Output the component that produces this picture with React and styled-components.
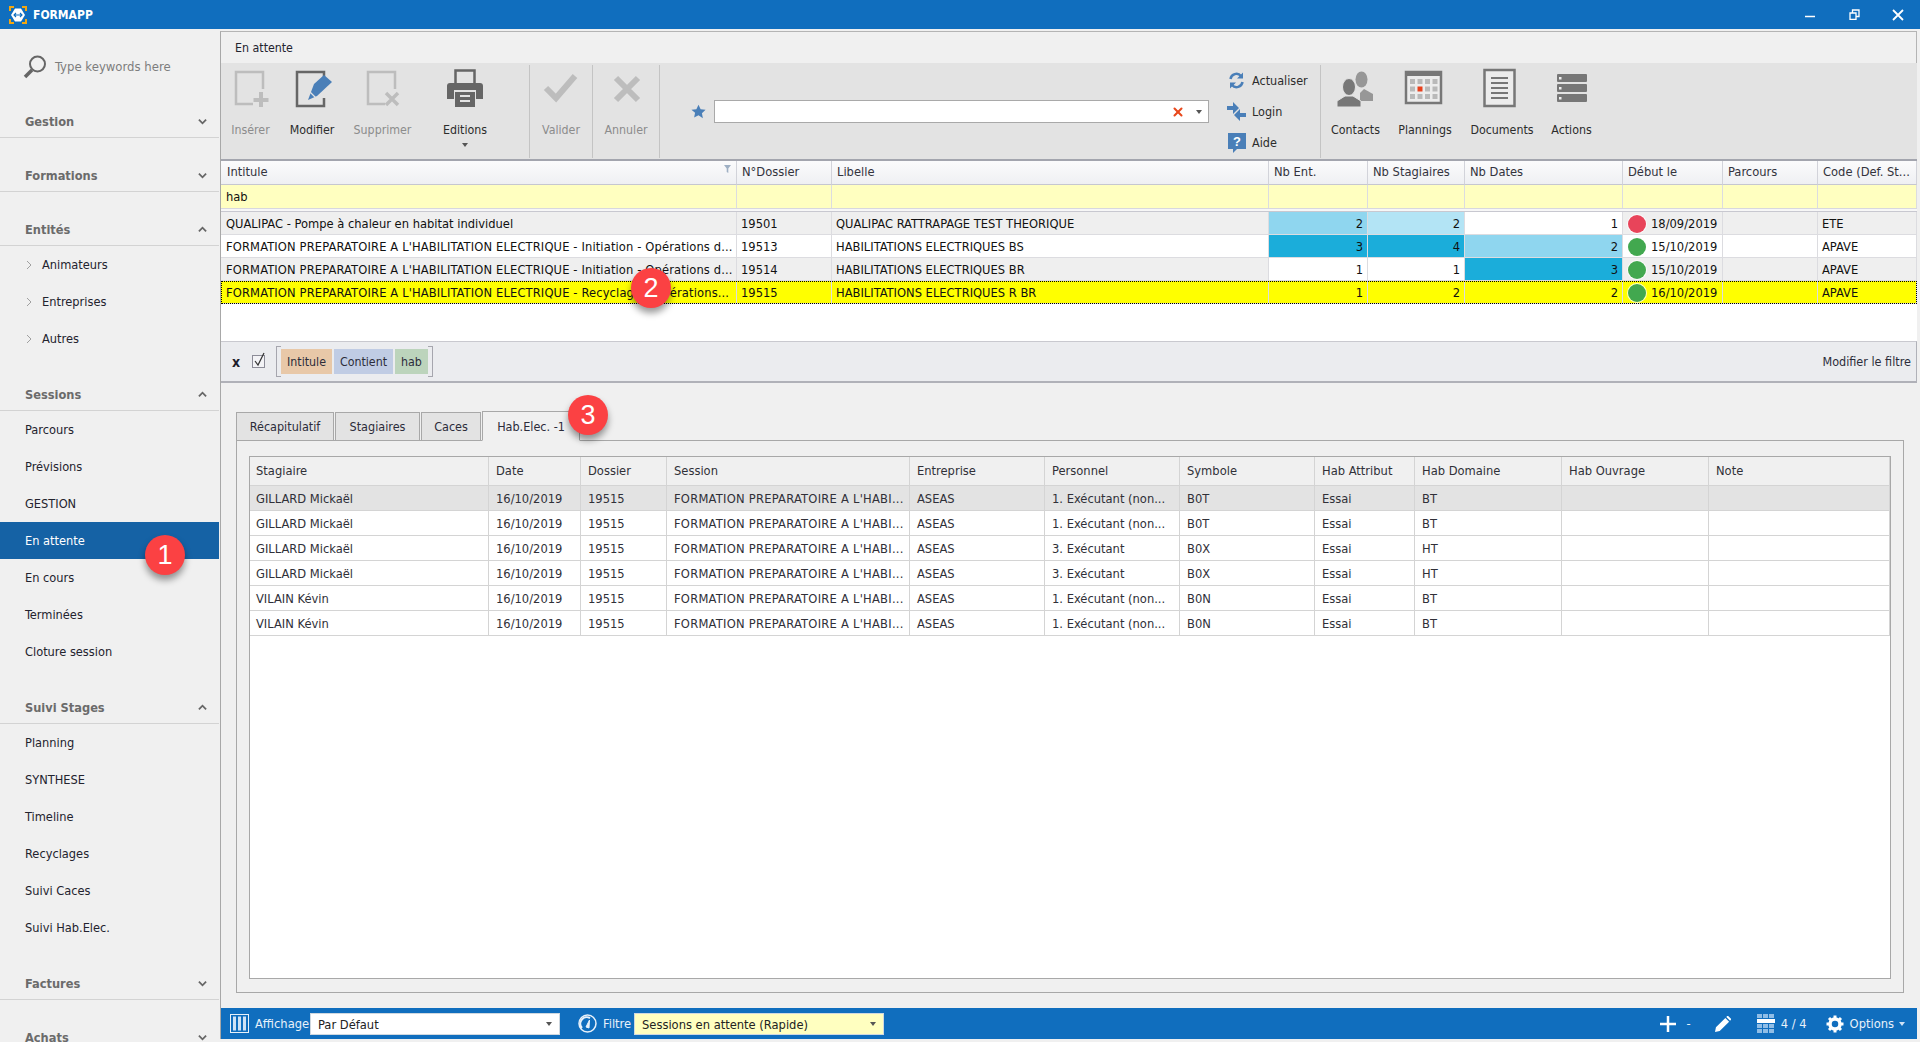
import React from 'react';
import styled, { createGlobalStyle } from 'styled-components';
import { X } from 'lucide-react';

const GlobalStyle = createGlobalStyle`
  html, body {
    margin: 0;
    padding: 0;
    height: 100%;
    overflow: hidden;
    background: #f0f0f0;
  }
  * {
    box-sizing: border-box;
  }
`

const BLUE = '#106ebe';
const UPPER_COLS = '516px 95px 437px 99px 97px 158px 100px 95px 99px';
const LOWER_COLS = '239px 92px 86px 243px 135px 135px 135px 100px 147px 147px 181px';

const Page = styled.div`
  position: relative;
  width: 1920px;
  height: 1042px;
  overflow: hidden;
  display: flex;
  flex-direction: column;
  background: #f0f0f0;
  font-family: "DejaVu Sans Condensed", "Noto Sans", "Liberation Sans", sans-serif;
  font-size: 12.3px;
  color: #23232e;
`

const TitleBar = styled.div`
  height: 29px;
  flex: none;
  background: ${BLUE};
  display: flex;
  align-items: center;
  padding-left: 9px;
  color: #fff;
`

const AppName = styled.span`
  font-weight: 700;
  margin-left: 6px;
  font-size: 12px;
`

const WindowButtons = styled.div`
  margin-left: auto;
  display: flex;
  align-items: center;
`

const WindowButton = styled.span`
  width: 44px;
  height: 29px;
  display: flex;
  align-items: center;
  justify-content: center;
`

const Body = styled.div`
  flex: 1;
  display: flex;
  min-height: 0;
`

const Sidebar = styled.div`
  width: 220px;
  flex: none;
  overflow: hidden;
  padding-right: 1px;
  font-size: 12.7px;
`

const SearchBox = styled.div`
  height: 55px;
  display: flex;
  align-items: center;
  padding: 20px 0 0 23px;
  gap: 8px;
  color: #7d7d7d;
  font-size: 13px;
`

const SectionHeader = styled.div`
  height: 54px;
  display: flex;
  align-items: flex-end;
  justify-content: space-between;
  padding: 0 12px 7px 25px;
  border-bottom: 1px solid #d3d3d3;
  font-weight: 700;
  font-size: 12.7px;
  line-height: 16px;
  color: #6b6b6b;

  svg {
    margin-bottom: 4px;
  }
`

const NavItem = styled.div`
  height: 37px;
  display: flex;
  align-items: center;
  padding-left: ${p => (p.$sub ? '26px' : '25px')};
  background: ${p => (p.$active ? '#1562a5' : 'transparent')};
  color: ${p => (p.$active ? '#fff' : '#23232e')};
  gap: 9px;
`

const Main = styled.div`
  width: 1697px;
  flex: none;
  margin: 2px 0 3px;
  display: flex;
  flex-direction: column;
  border-left: 1px solid #a8a8a8;
  border-top: 1px solid #b4b4b4;
  min-height: 0;
`

const PageTitle = styled.div`
  height: 31px;
  flex: none;
  display: flex;
  align-items: center;
  padding-left: 14px;
  background: #f0f0f0;
  border-right: 1px solid #b4b4b4;
`

const Toolbar = styled.div`
  height: 96px;
  flex: none;
  display: flex;
  padding: 2px 0 1px;
  background: #e3e3e3;
`

const ToolGroup = styled.div`
  display: flex;
  flex: none;
  width: ${p => p.$width}px;
  padding-left: ${p => p.$pad || 0}px;
  border-right: ${p => (p.$plain ? '0' : '1px solid #c4c4c4')};
`

const ToolButton = styled.div`
  width: ${p => p.$width}px;
  flex: none;
  display: flex;
  flex-direction: column;
  align-items: center;
  padding-top: 3px;
  color: ${p => (p.$disabled ? '#8c8c8c' : '#2c2c2c')};
`

const ToolLabel = styled.span`
  margin-top: 12px;
  line-height: 16px;
`

const SmallCaret = styled.span`
  width: 0;
  height: 0;
  flex: none;
  margin-top: ${p => p.$top || 0}px;
  border-left: 3px solid transparent;
  border-right: 3px solid transparent;
  border-top: 4px solid ${p => p.$color || '#555'};
`

const SearchGroup = styled(ToolGroup)`
  align-items: center;
`

const SearchInput = styled.div`
  width: 495px;
  height: 23px;
  margin-left: 8px;
  background: #fff;
  border: 1px solid #a9a9a9;
  display: flex;
  align-items: center;
  justify-content: flex-end;
  gap: 11px;
  padding-right: 6px;
`

const LinkColumn = styled.div`
  margin-left: 18px;
  display: flex;
  flex-direction: column;
  height: 93px;
  font-size: 12.5px;
`

const LinkRow = styled.div`
  height: 32px;
  display: flex;
  align-items: center;
  gap: 6px;
  color: #2c2c2c;
`

const LinkIcon = styled.span`
  width: 19px;
  flex: none;
  display: flex;
  justify-content: center;
`

const GridHead = styled.div`
  flex: none;
  border-top: 2px solid #a3a5ae;
  font-size: 12.8px;
`

const GridRow = styled.div`
  display: grid;
  grid-template-columns: ${UPPER_COLS};
  height: ${p => p.$height}px;
`

const HeadCell = styled.div`
  display: flex;
  align-items: center;
  padding: 0 0 2px 5px;
  position: relative;
  background: linear-gradient(#fbfbfc, #eff0f3);
  border-right: 1px solid #d2d3da;
  border-bottom: 1px solid #c6c7d0;
  color: #33333d;

  &:first-child {
    padding-left: 6px;
  }
`

const FunnelMark = styled.svg`
  position: absolute;
  right: 5px;
  top: 4px;
`

const FilterCell = styled.div`
  display: flex;
  align-items: center;
  padding-left: 5px;
  background: #ffffc0;
  border-right: 1px solid #dcdce0;
  color: #111;
`

const Spacer = styled.div`
  height: 4px;
  background: #f7f7f7;
  border-top: 1px solid #d8d8de;
  border-bottom: 1px solid #c8c8d0;
`

const DataRow = styled.div`
  display: grid;
  grid-template-columns: ${UPPER_COLS};
  height: 23px;
  background: ${p => (p.$selected ? '#ffff00' : p.$odd ? '#efefef' : '#fff')};
  outline: ${p => (p.$selected ? '1px dotted #000' : 'none')};
  outline-offset: -1px;
  color: #111;
  font-size: 12.8px;
`

const DataCell = styled.div`
  display: flex;
  align-items: center;
  justify-content: ${p => (p.$num ? 'flex-end' : 'flex-start')};
  padding: ${p => (p.$num ? '1px 4px 0 0' : '1px 0 0 4px')};
  background: ${p => p.$fill || 'transparent'};
  border-right: 1px solid #dcdce0;
  border-bottom: 1px solid #dcdce0;
  gap: 5px;
  white-space: nowrap;
  overflow: hidden;
  letter-spacing: ${p => (p.$wide ? '0.135px' : '0')};

  &:first-child {
    padding-left: 5px;
  }
`

const StatusDot = styled.span`
  width: 18px;
  height: 18px;
  flex: none;
  margin-left: 1px;
  border-radius: 50%;
  background: ${p => p.$color};
  box-shadow: 0 0 0 1px #ffffffc0;
`

const EmptyArea = styled.div`
  flex: none;
  height: 37px;
  background: #fff;
`

const FilterBar = styled.div`
  height: 42px;
  flex: none;
  display: flex;
  align-items: center;
  padding: 0 5px 0 8px;
  background: #ebecef;
  border-top: 1px solid #c9c9cf;
  border-bottom: 2px solid #b0b1b8;
  border-right: 1px solid #b0b1b8;
  font-size: 12.3px;
`

const ClearMark = styled.span`
  width: 14px;
  text-align: center;
  font-weight: 700;
  font-size: 14px;
  line-height: 14px;
  color: #1d1d2b;
`

const CheckFrame = styled.span`
  width: 13px;
  height: 13px;
  margin-left: 9px;
  display: flex;
  border: 1px solid #8c8c98;
  background: #f3f3f6;

  svg {
    margin-top: -4px;
    flex: none;
  }
`

const ChipBracket = styled.div`
  position: relative;
  margin-left: 11px;
  display: flex;
  gap: 2px;
  padding: 0 5px;

  &::before,
  &::after {
    content: '';
    position: absolute;
    top: -3px;
    bottom: -3px;
    width: 4px;
    border: 1px solid #a6a6ae;
  }

  &::before {
    left: 0;
    border-right: 0;
  }

  &::after {
    right: 0;
    border-left: 0;
  }
`

const Chip = styled.span`
  height: 25px;
  width: ${p => p.$width}px;
  display: flex;
  align-items: center;
  justify-content: center;
  background: ${p => p.$color};
  color: #2c2c3a;
`

const ModifyLink = styled.span`
  margin-left: auto;
  color: #2c2c3a;
  font-size: 12.5px;
`

const Detail = styled.div`
  flex: 1;
  min-height: 0;
  display: flex;
  flex-direction: column;
  padding: 28px 13px 15px 15px;
`

const TabStrip = styled.div`
  display: flex;
  height: 30px;
  flex: none;
  align-items: flex-end;
  margin-bottom: -1px;
  position: relative;
  font-size: 12.5px;
`

const Tab = styled.div`
  width: ${p => p.$width}px;
  height: ${p => (p.$active ? '30px' : '29px')};
  display: flex;
  align-items: center;
  justify-content: center;
  margin-right: ${p => (p.$active ? '0' : '1px')};
  background: ${p => (p.$active ? '#f0f0f0' : '#e3e3e3')};
  border: 1px solid #a8a8a8;
  border-bottom-color: ${p => (p.$active ? '#f0f0f0' : '#a8a8a8')};
  color: #2c2c3a;
`

const TabPanel = styled.div`
  flex: 1;
  min-height: 0;
  padding: 15px 12px 13px 12px;
  border: 1px solid #a8a8a8;
`

const InnerGrid = styled.div`
  height: 100%;
  background: #fff;
  border: 1px solid #a8a8a8;
  font-size: 12.8px;
`

const InnerRow = styled.div`
  display: grid;
  grid-template-columns: ${LOWER_COLS};
  height: ${p => p.$height}px;
  background: ${p => p.$bg};
`

const InnerCell = styled.div`
  display: flex;
  align-items: center;
  padding: ${p => (p.$head ? '0 0 2px' : '1px 0 0')} 7px;
  border-right: 1px solid #d4d4d4;
  border-bottom: 1px solid #d4d4d4;
  white-space: nowrap;
  overflow: hidden;
  color: #303038;
  letter-spacing: ${p => (p.$wide ? '0.25px' : '0')};

  &:first-child {
    padding-left: 6px;
  }
`

const StatusBar = styled.div`
  height: 31px;
  flex: none;
  display: flex;
  align-items: center;
  padding: 0 12px 0 9px;
  background: ${BLUE};
  color: #e8f1fa;
  font-size: 12.8px;
`

const StatusLabel = styled.span`
  width: ${p => p.$width}px;
  flex: none;
  margin-left: 6px;
  white-space: nowrap;
`

const SelectBox = styled.div`
  width: 250px;
  height: 22px;
  flex: none;
  display: flex;
  align-items: center;
  justify-content: space-between;
  padding: 1px 7px 0;
  background: ${p => p.$bg};
  border: 1px solid #cfd8e0;
  color: #222;
  margin-right: ${p => p.$gap || 0}px;
`

const StatusRight = styled.div`
  margin-left: auto;
  display: flex;
  align-items: center;
`

const StatusItem = styled.span`
  display: flex;
  align-items: center;
  flex: none;
  margin-right: ${p => p.$after || 0}px;
`

const Marker = styled.div`
  position: absolute;
  left: ${p => p.$x - 20}px;
  top: ${p => p.$y - 20}px;
  width: 40px;
  height: 40px;
  border-radius: 50%;
  display: flex;
  align-items: center;
  justify-content: center;
  background: #fb4143;
  color: #fff;
  font-family: "Liberation Sans", sans-serif;
  font-size: 27px;
  box-shadow: 0 5px 7px rgba(0, 0, 0, 0.4);
`

const Logo = () => (
  <svg width="18" height="18" viewBox="0 0 18 18" fill="none">
    <path d="M1 5V1h4M13 1h4v4M17 13v4h-4M5 17H1v-4" stroke="#f3a712" strokeWidth="2" />
    <path d="M6 2.500h6l4 6.500-4 6.500H6L2 9z" fill="#fff" />
    <path d="M5 9h8M7 7L5 9L7 11M11 7L13 9L11 11" stroke={BLUE} strokeWidth="1.100" />
  </svg>
);

const Magnifier = () => (
  <svg width="24" height="24" viewBox="0 0 24 24" fill="none" stroke="#666">
    <circle cx="14.500" cy="9" r="7.500" strokeWidth="2" />
    <path d="M9 15L2 22" strokeWidth="3.500" />
  </svg>
);

const Chevron = ({ up, color = '#666', size = 9 }) => (
  <svg width={size} height={size} viewBox="0 0 10 10" fill="none" stroke={color} strokeWidth="2">
    <path d={up ? 'M1 7L5 3L9 7' : 'M1 3L5 7L9 3'} />
  </svg>
);

const SubArrow = () => (
  <svg width="7" height="10" viewBox="0 0 7 10" fill="none" stroke="#a0a0a0" strokeWidth="1">
    <path d="M1 1l4 4-4 4" />
  </svg>
);

const Tool = ({ children }) => (
  <svg width="44" height="42" viewBox="0 0 44 42" fill="none">{children}</svg>
);

const DocFrame = ({ color, sw }) => (
  <path d="M24 36H7V4h27v17" stroke={color} strokeWidth={sw} />
);

const InsertIcon = () => (
  <Tool>
    <DocFrame color="#bdbdbd" sw="2.500" />
    <path d="M32 24v15M24.500 32h15" stroke="#bdbdbd" strokeWidth="4" />
  </Tool>
);

const EditIcon = () => (
  <Tool>
    <path d="M34 10V4H7v34h27v-8" stroke="#666" strokeWidth="2.500" />
    <path d="M24 16l10-9 8 7-15 14-9 4z" fill="#4a7fb8" />
    <path d="M20 24l7 7" stroke="#e3e3e3" strokeWidth="1.200" />
  </Tool>
);

const DeleteIcon = () => (
  <Tool>
    <DocFrame color="#bdbdbd" sw="2.500" />
    <path d="M25 25l12 12M37 25L25 37" stroke="#bdbdbd" strokeWidth="3.500" />
  </Tool>
);

const PrintIcon = () => (
  <Tool>
    <path d="M12.500 16V2.500h19V16" stroke="#666" strokeWidth="2.500" />
    <path d="M4 18q0-3 3-3h30q3 0 3 3v13H33v-9H11v9H4z" fill="#666" />
    <path d="M12 24h20v15H12z" fill="#666" />
    <path d="M17 28h10M17 33h10" stroke="#e3e3e3" strokeWidth="2" />
  </Tool>
);

const CheckIcon = () => (
  <Tool>
    <path d="M7 20l10 10L36 8" stroke="#bdbdbd" strokeWidth="6" />
  </Tool>
);

const CancelIcon = () => (
  <Tool>
    <path d="M12 10l22 22M34 10L12 32" stroke="#bdbdbd" strokeWidth="6" />
  </Tool>
);

const ContactsIcon = () => (
  <Tool>
    <ellipse cx="27.500" cy="11.500" rx="6" ry="8" fill="#979797" />
    <path d="M30 21l9 5v7H26v-8z" fill="#979797" />
    <ellipse cx="15" cy="19" rx="6.500" ry="8.500" fill="#777" stroke="#e3e3e3" />
    <path d="M3 39v-6l8-5h8l8 5v6z" fill="#777" stroke="#e3e3e3" />
  </Tool>
);

const calendarCells = [0, 1, 2, 3].flatMap(c => [0, 1, 2].map(r => [c, r]));

const PlanningIcon = () => (
  <Tool>
    <rect x="3" y="4" width="35" height="31" fill="#ececec" stroke="#777" strokeWidth="2.500" />
    <path d="M3 6h35" stroke="#777" strokeWidth="4" />
    {calendarCells.map(([c, r]) => (
      <rect
        key={`${c}-${r}`}
        x={7 + c * 7.500}
        y={11 + r * 7.500}
        width="5"
        height="5"
        fill={c === 1 && r === 1 ? '#e8401c' : '#b9b9b9'}
      />
    ))}
  </Tool>
);

const DocumentIcon = () => (
  <Tool>
    <rect x="4.500" y="2" width="30" height="36" fill="#ececec" stroke="#777" strokeWidth="2.500" />
    <path d="M11 10h17M11 15h17M11 20h17M11 25h17M11 30h17" stroke="#777" strokeWidth="2" />
  </Tool>
);

const ActionsIcon = () => (
  <Tool>
    {[6, 16, 26].map(y => (
      <g key={y}>
        <rect x="7" y={y} width="30" height="8" rx="1" fill="#777" />
        <rect x="9" y={y + 3} width="2.500" height="2.500" fill="#eee" />
      </g>
    ))}
  </Tool>
);

const StarIcon = () => (
  <svg width="15" height="15" viewBox="0 0 24 24" fill="#4a7fb8">
    <path d="M12 1l3.400 7.300 7.900 1-5.800 5.500 1.500 7.900L12 17.800l-7 3.900 1.500-7.900L.700 9.300l7.900-1z" />
  </svg>
);

const RefreshIcon = () => (
  <svg width="17" height="17" viewBox="0 0 17 17" fill="none" stroke="#4a7fb8" strokeWidth="2.500">
    <path d="M2.500 7a6 6 0 0 1 10.500-3" />
    <path d="M14.500 10a6 6 0 0 1-10.500 3" />
    <path d="M15 0.500v6H9z M2 16.500v-6h6z" fill="#4a7fb8" stroke="none" />
  </svg>
);

const LoginIcon = () => (
  <svg width="19" height="19" viewBox="0 0 19 19" fill="#4a7fb8">
    <path d="M0 4h6V0l6 6-6 6V8H0z" />
    <path d="M19 11h-6V7l-6 6 6 6v-4h6z" />
  </svg>
);

const HelpIcon = () => (
  <svg width="18" height="20" viewBox="0 0 18 20">
    <path d="M0 0h18v16H9l-4 4v-4H0z" fill="#4a7fb8" />
    <text x="9" y="13" fontSize="13" fontWeight="700" textAnchor="middle" fill="#fff" fontFamily="Liberation Sans">?</text>
  </svg>
);

const ColumnsIcon = () => (
  <svg width="19" height="19" viewBox="0 0 19 19" fill="none" stroke="#e8f1fa">
    <rect x="0.500" y="0.500" width="18" height="18" strokeWidth="1" />
    <path d="M3 2.500h3v14H3zM8 2.500h3v14H8zM13 2.500h3v14h-3z" fill="#cfe2f5" stroke="none" />
  </svg>
);

const GaugeIcon = () => (
  <svg width="19" height="21" viewBox="0 0 19 21" fill="none" stroke="#e8f1fa">
    <circle cx="9.500" cy="10.500" r="8.500" strokeWidth="1.500" />
    <path d="M4 15a6.500 6.500 0 0 1 8-10" strokeWidth="2" />
    <path d="M8 14l3.500-7-0.500 8z" fill="#e8f1fa" />
  </svg>
);

const PencilIcon = () => (
  <svg width="16" height="16" viewBox="0 0 17 17" fill="#fff">
    <path d="M0 17l1-5L11 2l4 4L5 16zM12 1l1-1h1l3 3v1l-1 1z" />
  </svg>
);

const TableIcon = () => (
  <svg width="18" height="19" viewBox="0 0 18 19">
    {[0, 1, 2].map(c => <rect key={`t${c}`} x={c * 6} y="0" width="5" height="4" fill="#8fbde6" />)}
    <rect x="0" y="5" width="18" height="4" fill="#fff" />
    {[0, 1, 2].map(c => [10, 15].map(y => <rect key={`b${c}${y}`} x={c * 6} y={y} width="5" height="4" fill="#8fbde6" />))}
  </svg>
);

const GearIcon = () => (
  <svg width="18" height="18" viewBox="0 0 18 18" fill="none" stroke="#fff">
    <circle cx="9" cy="9" r="5" strokeWidth="3.500" />
    <path d="M9 0.500v3M9 14.500v3M0.500 9h3M14.500 9h3M3 3l2 2M13 13l2 2M15 3l-2 2M5 13l-2 2" strokeWidth="3" />
  </svg>
);

const nav = [
  { title: 'Gestion' },
  { title: 'Formations' },
  { title: 'Entités', open: true, sub: true, items: ['Animateurs', 'Entreprises', 'Autres'] },
  { title: 'Sessions', open: true, items: ['Parcours', 'Prévisions', 'GESTION', 'En attente', 'En cours', 'Terminées', 'Cloture session'] },
  { title: 'Suivi Stages', open: true, items: ['Planning', 'SYNTHESE', 'Timeline', 'Recyclages', 'Suivi Caces', 'Suivi Hab.Elec.'] },
  { title: 'Factures' },
  { title: 'Achats' },
];

const upperHead = ['Intitule', 'N°Dossier', 'Libelle', 'Nb Ent.', 'Nb Stagiaires', 'Nb Dates', 'Début le', 'Parcours', 'Code (Def. St...'];

const DARK = '#1badda';
const MID = '#8fd6ef';
const LIGHT = '#b3e4f5';

const sessions = [
  { intitule: 'QUALIPAC - Pompe à chaleur en habitat individuel', dossier: '19501', libelle: 'QUALIPAC RATTRAPAGE TEST THEORIQUE', ent: ['2', MID], stag: ['2', LIGHT], dates: ['1', '#fff'], dot: '#e8445a', debut: '18/09/2019', code: 'ETE' },
  { intitule: "FORMATION PREPARATOIRE A L'HABILITATION ELECTRIQUE - Initiation - Opérations d...", wide: true, dossier: '19513', libelle: 'HABILITATIONS ELECTRIQUES BS', ent: ['3', DARK], stag: ['4', DARK], dates: ['2', MID], dot: '#42a84f', debut: '15/10/2019', code: 'APAVE' },
  { intitule: "FORMATION PREPARATOIRE A L'HABILITATION ELECTRIQUE - Initiation - Opérations d...", wide: true, dossier: '19514', libelle: 'HABILITATIONS ELECTRIQUES BR', ent: ['1', '#fff'], stag: ['1', '#fff'], dates: ['3', DARK], dot: '#42a84f', debut: '15/10/2019', code: 'APAVE' },
  { intitule: "FORMATION PREPARATOIRE A L'HABILITATION ELECTRIQUE - Recyclage - Opérations...", wide: true, dossier: '19515', libelle: 'HABILITATIONS ELECTRIQUES R BR', ent: ['1'], stag: ['2'], dates: ['2'], dot: '#42a84f', debut: '16/10/2019', code: 'APAVE', selected: true },
];

const lowerHead = ['Stagiaire', 'Date', 'Dossier', 'Session', 'Entreprise', 'Personnel', 'Symbole', 'Hab Attribut', 'Hab Domaine', 'Hab Ouvrage', 'Note'];

const trainees = [
  ['GILLARD Mickaël', '1. Exécutant (non...', 'B0T', 'BT'],
  ['GILLARD Mickaël', '1. Exécutant (non...', 'B0T', 'BT'],
  ['GILLARD Mickaël', '3. Exécutant', 'B0X', 'HT'],
  ['GILLARD Mickaël', '3. Exécutant', 'B0X', 'HT'],
  ['VILAIN Kévin', '1. Exécutant (non...', 'B0N', 'BT'],
  ['VILAIN Kévin', '1. Exécutant (non...', 'B0N', 'BT'],
];

const App = () => {
  return (
    <Page>
      <GlobalStyle />
      <TitleBar>
        <Logo />
        <AppName>FORMAPP</AppName>
        <WindowButtons>
          <WindowButton>
            <svg width="10" height="10" viewBox="0 0 10 10" stroke="#fff" strokeWidth="1.500"><path d="M0 6.500h10" /></svg>
          </WindowButton>
          <WindowButton>
            <svg width="11" height="11" viewBox="0 0 11 11" fill="none" stroke="#fff" strokeWidth="1.300"><path d="M1 4h6v6.500H1zM3.500 3.500V1h6.500v6.500H7.500" /></svg>
          </WindowButton>
          <WindowButton>
            <svg width="12" height="12" viewBox="0 0 12 12" stroke="#fff" strokeWidth="1.800"><path d="M1 1l10 10M11 1L1 11" /></svg>
          </WindowButton>
        </WindowButtons>
      </TitleBar>

      <Body>
        <Sidebar>
          <SearchBox>
            <Magnifier />
            <span>Type keywords here</span>
          </SearchBox>
          {nav.map(section => (
            <div key={section.title}>
              <SectionHeader>
                <span>{section.title}</span>
                <Chevron up={section.open} />
              </SectionHeader>
              {(section.items || []).map(item => (
                <NavItem key={item} $active={item === 'En attente'} $sub={section.sub}>
                  {section.sub && <SubArrow />}
                  {item}
                </NavItem>
              ))}
            </div>
          ))}
        </Sidebar>

        <Main>
          <PageTitle>En attente</PageTitle>
          <Toolbar>
            <ToolGroup $width={309} $pad={3}>
              <ToolButton $width={53} $disabled><InsertIcon /><ToolLabel>Insérer</ToolLabel></ToolButton>
              <ToolButton $width={70}><EditIcon /><ToolLabel>Modifier</ToolLabel></ToolButton>
              <ToolButton $width={71} $disabled><DeleteIcon /><ToolLabel>Supprimer</ToolLabel></ToolButton>
              <ToolButton $width={94}>
                <PrintIcon />
                <ToolLabel>Editions</ToolLabel>
                <SmallCaret $top={5} />
              </ToolButton>
            </ToolGroup>
            <ToolGroup $width={63}>
              <ToolButton $width={62} $disabled><CheckIcon /><ToolLabel>Valider</ToolLabel></ToolButton>
            </ToolGroup>
            <ToolGroup $width={67}>
              <ToolButton $width={66} $disabled><CancelIcon /><ToolLabel>Annuler</ToolLabel></ToolButton>
            </ToolGroup>
            <SearchGroup $width={661} $pad={31}>
              <StarIcon />
              <SearchInput>
                <X size={14} color="#e8481c" strokeWidth={3.500} />
                <SmallCaret />
              </SearchInput>
              <LinkColumn>
                <LinkRow><LinkIcon><RefreshIcon /></LinkIcon>Actualiser</LinkRow>
                <LinkRow><LinkIcon><LoginIcon /></LinkIcon>Login</LinkRow>
                <LinkRow><LinkIcon><HelpIcon /></LinkIcon>Aide</LinkRow>
              </LinkColumn>
            </SearchGroup>
            <ToolGroup $width={278} $plain>
              <ToolButton $width={69}><ContactsIcon /><ToolLabel>Contacts</ToolLabel></ToolButton>
              <ToolButton $width={70}><PlanningIcon /><ToolLabel>Plannings</ToolLabel></ToolButton>
              <ToolButton $width={84}><DocumentIcon /><ToolLabel>Documents</ToolLabel></ToolButton>
              <ToolButton $width={55}><ActionsIcon /><ToolLabel>Actions</ToolLabel></ToolButton>
            </ToolGroup>
          </Toolbar>

          <GridHead>
            <GridRow $height={24}>
              {upperHead.map((label, i) => (
                <HeadCell key={label}>
                  {label}
                  {i === 0 && (
                    <FunnelMark width="7" height="8" viewBox="0 0 7 8" fill="#9fb0c4">
                      <path d="M0 0h7L4.300 3.500V8L2.700 7V3.500z" />
                    </FunnelMark>
                  )}
                </HeadCell>
              ))}
            </GridRow>
            <GridRow $height={23}>
              {upperHead.map((label, i) => (
                <FilterCell key={label}>{i === 0 ? 'hab' : ''}</FilterCell>
              ))}
            </GridRow>
            <Spacer />
          </GridHead>

          {sessions.map((row, i) => (
            <DataRow key={row.dossier} $odd={i % 2 === 0} $selected={row.selected}>
              <DataCell $wide={row.wide}>{row.intitule}</DataCell>
              <DataCell>{row.dossier}</DataCell>
              <DataCell>{row.libelle}</DataCell>
              <DataCell $num $fill={row.ent[1]}>{row.ent[0]}</DataCell>
              <DataCell $num $fill={row.stag[1]}>{row.stag[0]}</DataCell>
              <DataCell $num $fill={row.dates[1]}>{row.dates[0]}</DataCell>
              <DataCell><StatusDot $color={row.dot} />{row.debut}</DataCell>
              <DataCell />
              <DataCell>{row.code}</DataCell>
            </DataRow>
          ))}
          <EmptyArea />

          <FilterBar>
            <ClearMark>x</ClearMark>
            <CheckFrame>
              <svg width="13" height="15" viewBox="0 0 13 15" fill="none" stroke="#333" strokeWidth="1.200">
                <path d="M2 9l3 4 6-12" />
              </svg>
            </CheckFrame>
            <ChipBracket>
              <Chip $color="#e8c8a8" $width={51}>Intitule</Chip>
              <Chip $color="#c0cce4" $width={59}>Contient</Chip>
              <Chip $color="#bcd4bc" $width={33}>hab</Chip>
            </ChipBracket>
            <ModifyLink>Modifier le filtre</ModifyLink>
          </FilterBar>

          <Detail>
            <TabStrip>
              <Tab $width={98}>Récapitulatif</Tab>
              <Tab $width={85}>Stagiaires</Tab>
              <Tab $width={60}>Caces</Tab>
              <Tab $width={98} $active>Hab.Elec. -1</Tab>
            </TabStrip>
            <TabPanel>
              <InnerGrid>
                <InnerRow $height={29} $bg="#f0f0f0">
                  {lowerHead.map(label => <InnerCell key={label} $head>{label}</InnerCell>)}
                </InnerRow>
                {trainees.map(([name, personnel, symbole, domaine], i) => (
                  <InnerRow key={i} $height={25} $bg={i === 0 ? '#e3e3e3' : '#fff'}>
                    <InnerCell>{name}</InnerCell>
                    <InnerCell>16/10/2019</InnerCell>
                    <InnerCell>19515</InnerCell>
                    <InnerCell $wide>FORMATION PREPARATOIRE A L'HABI...</InnerCell>
                    <InnerCell>ASEAS</InnerCell>
                    <InnerCell>{personnel}</InnerCell>
                    <InnerCell>{symbole}</InnerCell>
                    <InnerCell>Essai</InnerCell>
                    <InnerCell>{domaine}</InnerCell>
                    <InnerCell />
                    <InnerCell />
                  </InnerRow>
                ))}
              </InnerGrid>
            </TabPanel>
          </Detail>

          <StatusBar>
            <ColumnsIcon />
            <StatusLabel $width={55}>Affichage</StatusLabel>
            <SelectBox $bg="#fff" $gap={18}>Par Défaut<SmallCaret /></SelectBox>
            <GaugeIcon />
            <StatusLabel $width={31}>Filtre</StatusLabel>
            <SelectBox $bg="#ffffc0">Sessions en attente (Rapide)<SmallCaret /></SelectBox>
            <StatusRight>
              <StatusItem $after={11}>
                <svg width="16" height="16" viewBox="0 0 16 16" stroke="#fff" strokeWidth="2.500"><path d="M8 0v16M0 8h16" /></svg>
              </StatusItem>
              <StatusItem $after={24}>-</StatusItem>
              <StatusItem $after={26}><PencilIcon /></StatusItem>
              <StatusItem $after={6}><TableIcon /></StatusItem>
              <StatusItem $after={19}>4 / 4</StatusItem>
              <StatusItem $after={6}><GearIcon /></StatusItem>
              <StatusItem $after={5}>Options</StatusItem>
              <SmallCaret $color="#cfe2f5" />
            </StatusRight>
          </StatusBar>
        </Main>
      </Body>

      <Marker $x={165} $y={555}>1</Marker>
      <Marker $x={651} $y={288}>2</Marker>
      <Marker $x={588} $y={415}>3</Marker>
    </Page>
  );
}

export default App;
